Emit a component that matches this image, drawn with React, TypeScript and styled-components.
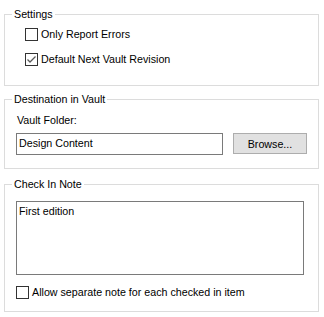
import styled, { createGlobalStyle } from 'styled-components';

const GlobalStyle = createGlobalStyle`
  html, body {
    margin: 0;
    padding: 0;
    background: #ffffff;
  }
  body {
    font-family: 'Liberation Sans', Arial, sans-serif;
    font-size: 10.7px;
    color: #000000;
  }
`;

const CheckBox: React.FC<{ checked?: boolean; label: string }> = ({ checked, label }) => (
  <CheckRow>
    <Box>
      {checked && (
        <svg width="11" height="11" viewBox="0 0 11 11">
          <path d="M1.5 5.5 L4 8 L9.5 2.5" fill="none" stroke="#5a5a5a" strokeWidth="1.3" />
        </svg>
      )}
    </Box>
    <span>{label}</span>
  </CheckRow>
);

export default function App() {
  return (
    <Dialog>
      <GlobalStyle />
      <Group $top={8} $pt={7} $pb={19}>
        <Legend>Settings</Legend>
        <CheckList>
          <CheckBox label="Only Report Errors" />
          <CheckBox checked label="Default Next Vault Revision" />
        </CheckList>
      </Group>
      <Group $top={7} $pt={8} $pb={13}>
        <Legend>Destination in Vault</Legend>
        <Inner>
          <Label>Vault Folder:</Label>
          <FolderRow>
            <TextBox>Design Content</TextBox>
            <Button>Browse...</Button>
          </FolderRow>
        </Inner>
      </Group>
      <Group $top={9} $pt={10} $pb={12}>
        <Legend>Check In Note</Legend>
        <Inner>
          <NoteArea>First edition</NoteArea>
          <CheckBox label="Allow separate note for each checked in item" />
        </Inner>
      </Group>
    </Dialog>
  );
}

const Dialog = styled.div`
  width: 324px;
  height: 317px;
  display: flex;
  flex-direction: column;
`;

const Group = styled.fieldset<{ $top: number; $pt: number; $pb: number }>`
  margin: ${(p) => p.$top}px 0 0 4px;
  width: 315px;
  box-sizing: border-box;
  border: 1px solid #dcdcdc;
  padding: ${(p) => p.$pt}px 7px ${(p) => p.$pb}px 7px;
  min-width: 0;
`;

const Legend = styled.legend`
  padding: 0 2px;
  line-height: 13px;
`;

const CheckList = styled.div`
  display: flex;
  flex-direction: column;
  gap: 12px;
  padding-left: 13px;
`;

const CheckRow = styled.div`
  display: flex;
  align-items: center;
  gap: 3px;
  height: 13px;
  line-height: 13px;
`;

const Box = styled.span`
  width: 13px;
  height: 13px;
  box-sizing: border-box;
  border: 1px solid #333333;
  background: #ffffff;
  display: flex;
  align-items: center;
  justify-content: center;
`;

const Inner = styled.div`
  display: flex;
  flex-direction: column;
  padding-left: 4px;
  gap: 11px;
`;

const Label = styled.div`
  line-height: 13px;
  padding-left: 1px;
  margin-bottom: -5px;
`;

const FolderRow = styled.div`
  display: flex;
  align-items: flex-start;
  gap: 10px;
`;

const TextBox = styled.div`
  width: 207px;
  height: 22px;
  box-sizing: border-box;
  border: 1px solid #7a7a7a;
  padding: 3px 2px;
  line-height: 13px;
`;

const Button = styled.div`
  width: 74px;
  height: 21px;
  box-sizing: border-box;
  border: 1px solid #adadad;
  background: #e1e1e1;
  display: flex;
  align-items: center;
  justify-content: center;
`;

const NoteArea = styled.div`
  width: 288px;
  height: 74px;
  box-sizing: border-box;
  border: 1px solid #7a7a7a;
  padding: 3px 2px;
  line-height: 13px;
`;
